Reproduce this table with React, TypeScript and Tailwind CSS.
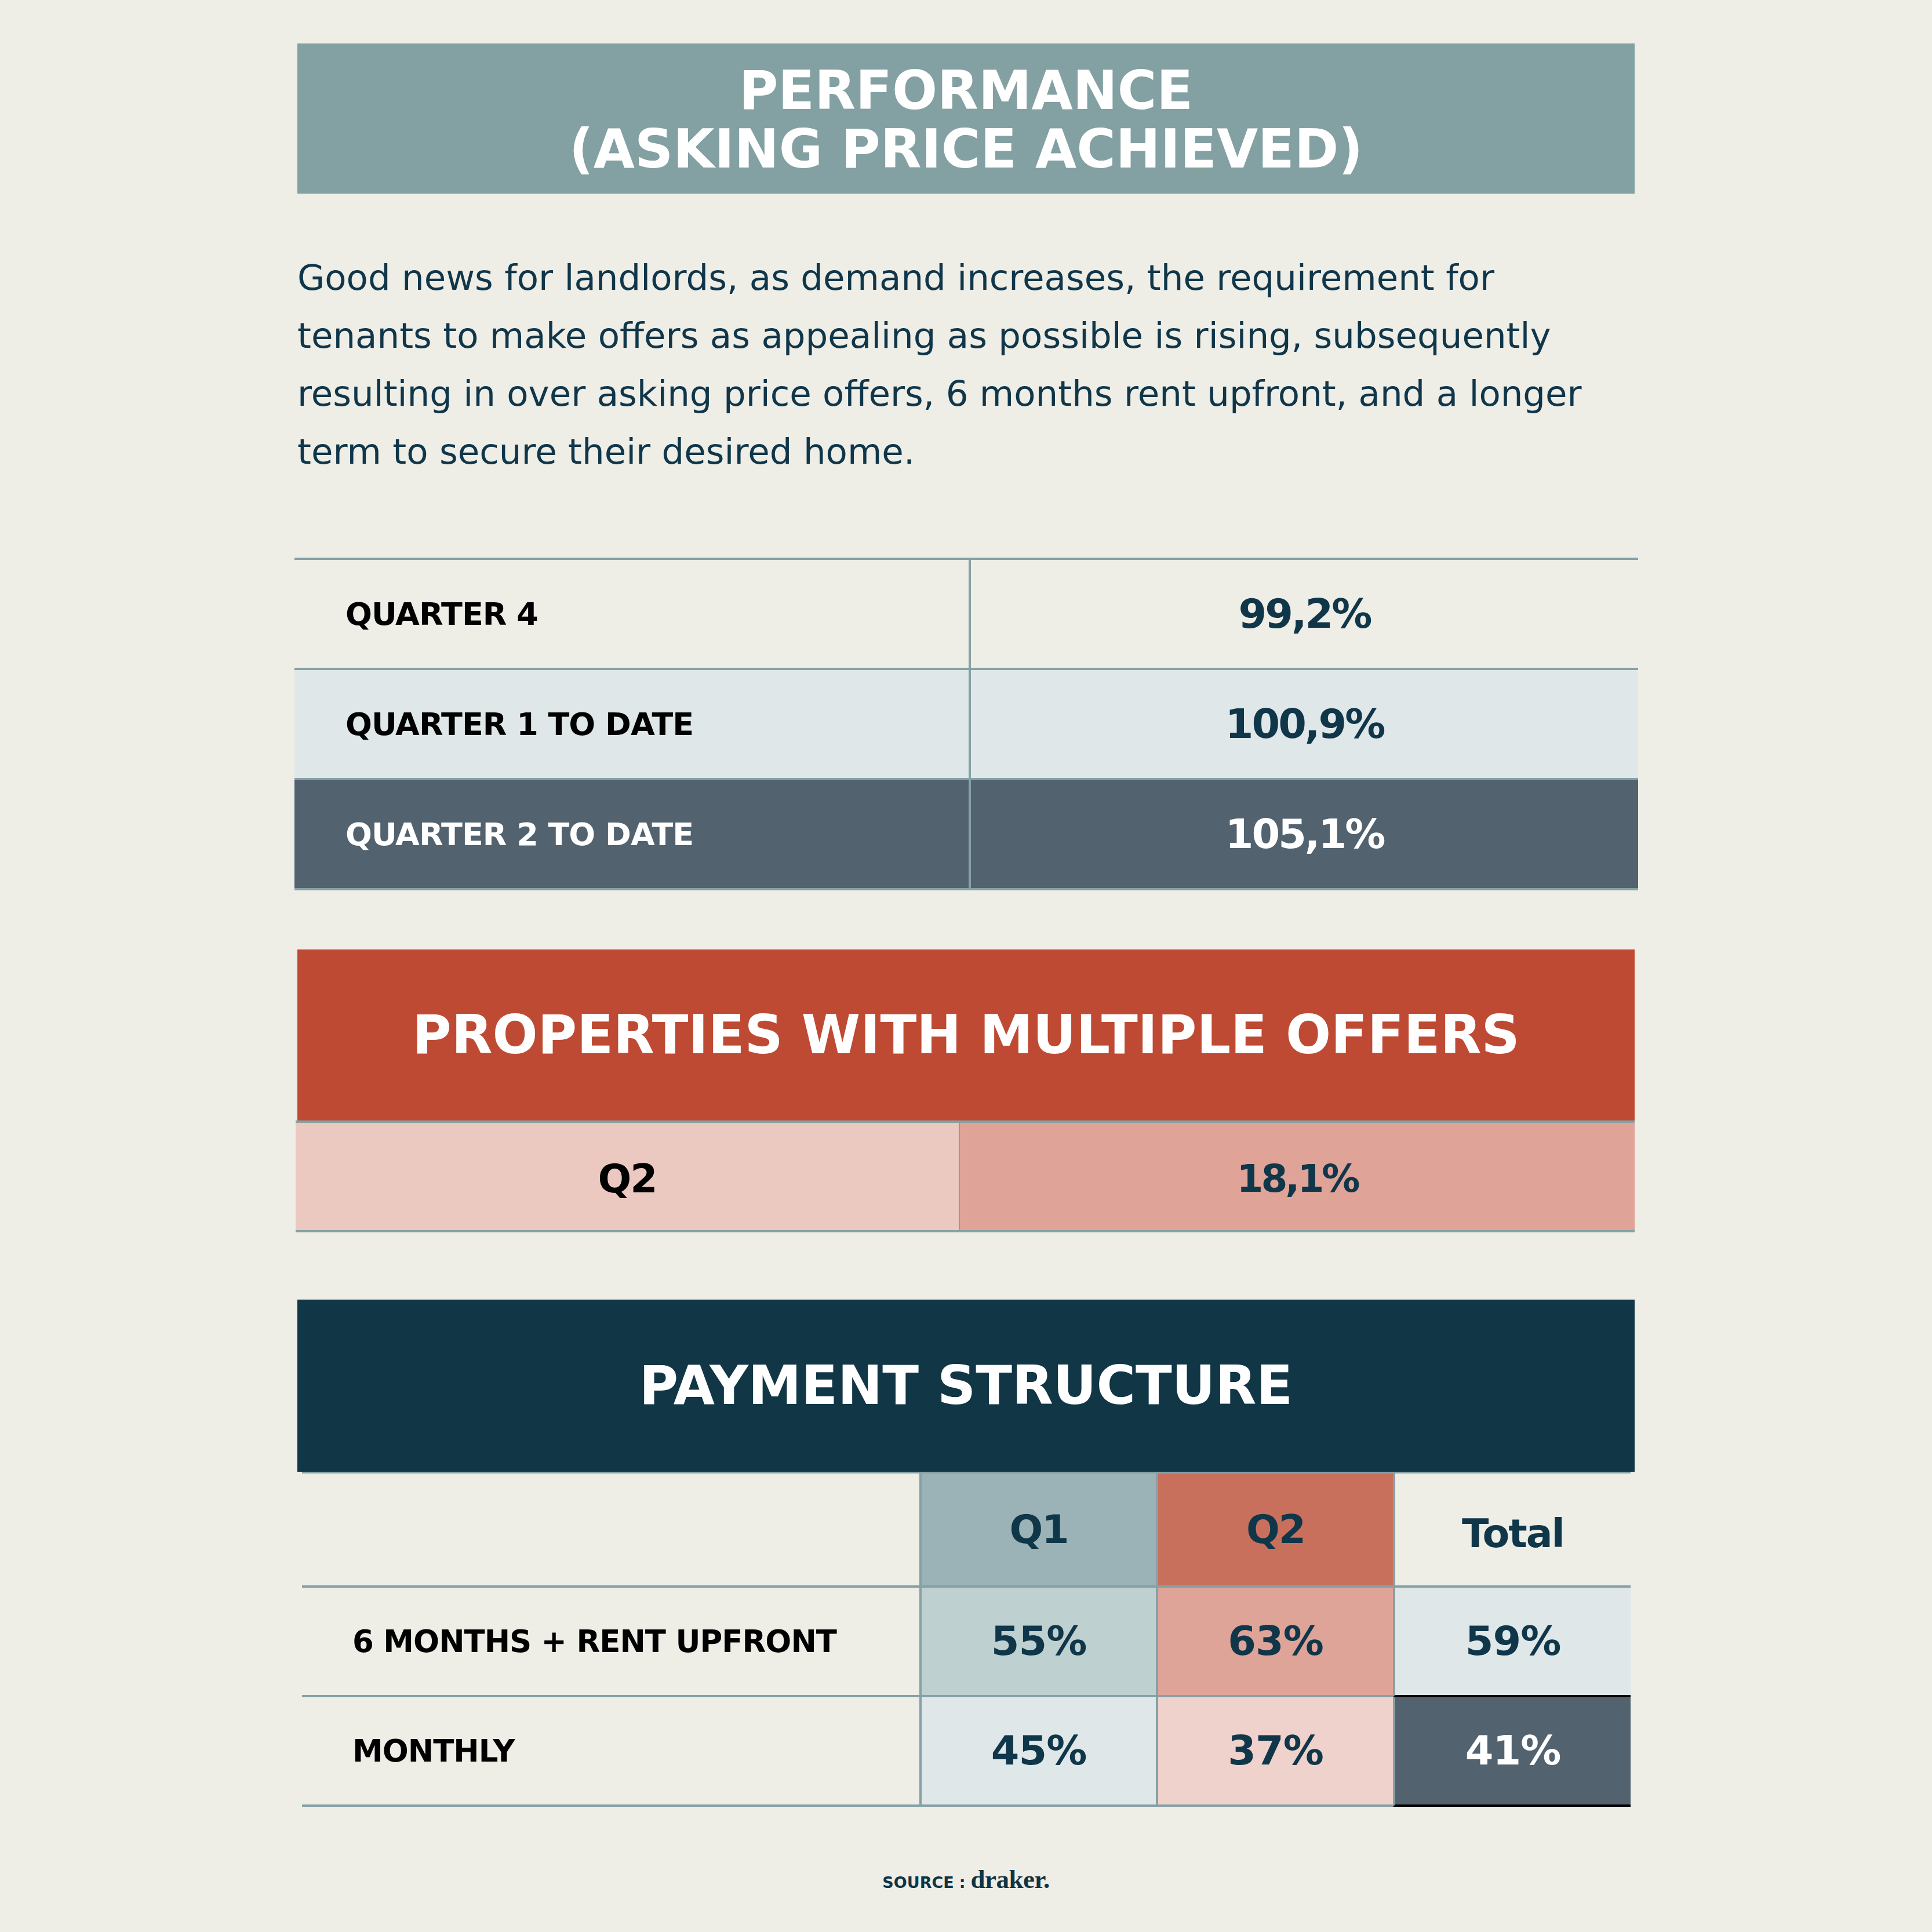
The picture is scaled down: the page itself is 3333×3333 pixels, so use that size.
import React from "react";

const sans = "font-['DejaVu_Sans',sans-serif]";

const intro = [
  "Good news for landlords, as demand increases, the requirement for",
  "tenants to make offers as appealing as possible is rising, subsequently",
  "resulting in over asking price offers, 6 months rent upfront, and a longer",
  "term to secure their desired home.",
];

const quarters = [
  { label: "QUARTER 4", value: "99,2%", row: "bg-[#eeede6]", label_c: "text-black", value_c: "text-[#10364a]" },
  { label: "QUARTER 1 TO DATE", value: "100,9%", row: "bg-[#dfe7e8]", label_c: "text-black", value_c: "text-[#10364a]" },
  { label: "QUARTER 2 TO DATE", value: "105,1%", row: "bg-[#52626f]", label_c: "text-white", value_c: "text-white" },
];

const payments = [
  {
    label: "6 MONTHS + RENT UPFRONT",
    cells: [
      { value: "55%", cls: "bg-[#bfd0d0] text-[#10364a] border-b-[#86a1a5]" },
      { value: "63%", cls: "bg-[#dfa498] text-[#10364a] border-b-[#86a1a5]" },
      { value: "59%", cls: "bg-[#dfe7e8] text-[#10364a] border-b-black" },
    ],
  },
  {
    label: "MONTHLY",
    cells: [
      { value: "45%", cls: "bg-[#dfe7e8] text-[#10364a] border-b-[#86a1a5]" },
      { value: "37%", cls: "bg-[#efd2cc] text-[#10364a] border-b-[#86a1a5]" },
      { value: "41%", cls: "bg-[#52626f] text-white border-b-black" },
    ],
  },
];

const Banner: React.FC<{ className: string; children: React.ReactNode }> = ({ className, children }) => (
  <div className={`flex items-center justify-center text-white font-bold text-[92px] leading-none ${className}`}>
    {children}
  </div>
);

export default function App() {
  return (
    <div className={`w-[3333px] h-[3333px] bg-[#eeede6] pt-[75px] ${sans}`}>
      <div className="ml-[513px] w-[2307px] flex flex-col">
        {/* title */}
        <div className="bg-[#83a0a3] pt-[31px] pb-[26px] text-center text-white font-bold text-[92px] leading-[101px]">
          <div>PERFORMANCE</div>
          <div>(ASKING PRICE ACHIEVED)</div>
        </div>

        <p className="mt-[95px] text-[61px] leading-[100px] text-[#10364a] whitespace-nowrap">
          {intro.map((line) => (
            <span key={line} className="block">
              {line}
            </span>
          ))}
        </p>

        {/* asking price table */}
        <div className="mt-[133px] -ml-[5px] w-[2318px] border-t-4 border-[#86a1a5]">
          {quarters.map((q) => (
            <div key={q.label} className={`flex h-[190px] border-b-4 border-[#86a1a5] ${q.row}`}>
              <div
                className={`w-[1167px] h-full flex items-center pl-[88px] border-r-4 border-[#86a1a5] font-bold text-[54px] tracking-[-1px] ${q.label_c}`}
              >
                {q.label}
              </div>
              <div className={`flex-1 flex items-center justify-center font-bold text-[70px] tracking-[-3px] ${q.value_c}`}>
                {q.value}
              </div>
            </div>
          ))}
        </div>

        {/* multiple offers */}
        <Banner className="mt-[102px] h-[295px] bg-[#bf4a33]">PROPERTIES WITH MULTIPLE OFFERS</Banner>
        <div className="-ml-[3px] w-[2310px] flex h-[193px] border-y-4 border-[#86a1a5]">
          <div className="w-[1146px] h-full flex items-center justify-center pt-[8px] bg-[#ebc8c0] border-r-2 border-[#86a1a5] font-bold text-[68px] tracking-[-2px] text-black">
            Q2
          </div>
          <div className="flex-1 h-full flex items-center justify-center pt-[8px] bg-[#dfa398] font-bold text-[66px] tracking-[-4px] text-[#10364a]">
            18,1%
          </div>
        </div>

        {/* payment structure */}
        <Banner className="mt-[116px] h-[297px] bg-[#113646]">PAYMENT STRUCTURE</Banner>
        <div className="ml-[8px] w-[2292px] border-t-[3px] border-[#86a1a5] grid grid-cols-[1065px_408px_409px_410px]">
          <div className="h-[197px] border-b-4 border-b-[#86a1a5]" />
          <div className="h-[197px] flex items-center justify-center bg-[#9bb3b6] border-l-4 border-l-[#86a1a5] border-b-4 border-b-[#86a1a5] font-bold text-[68px] tracking-[-2px] text-[#10364a]">
            Q1
          </div>
          <div className="h-[197px] flex items-center justify-center bg-[#c9705d] border-l-4 border-l-[#86a1a5] border-b-4 border-b-[#86a1a5] font-bold text-[68px] tracking-[-2px] text-[#10364a]">
            Q2
          </div>
          <div className="h-[197px] flex items-center justify-center pt-[14px] border-l-4 border-l-[#86a1a5] border-b-4 border-b-[#86a1a5] font-bold text-[68px] tracking-[-2px] text-[#10364a]">
            Total
          </div>

          {payments.map((row) => (
            <React.Fragment key={row.label}>
              <div className="h-[189px] flex items-center pl-[87px] border-b-4 border-b-[#86a1a5] font-bold text-[53px] tracking-[-1px] text-black">
                {row.label}
              </div>
              {row.cells.map((c) => (
                <div
                  key={c.value}
                  className={`h-[189px] flex items-center justify-center border-l-4 border-l-[#86a1a5] border-b-4 font-bold text-[70px] tracking-[-1px] ${c.cls}`}
                >
                  {c.value}
                </div>
              ))}
            </React.Fragment>
          ))}
        </div>

        {/* source */}
        <div className="mt-[103px] flex items-baseline justify-center text-[#0f3545]">
          <span className="font-bold text-[27px] leading-none">SOURCE</span>
          <span className="ml-[9px] font-bold text-[27px] leading-none">:</span>
          <span className="ml-[9px] font-['Liberation_Serif',serif] font-bold text-[45px] leading-none tracking-[-0.5px]">
            draker.
          </span>
        </div>
      </div>
    </div>
  );
}
